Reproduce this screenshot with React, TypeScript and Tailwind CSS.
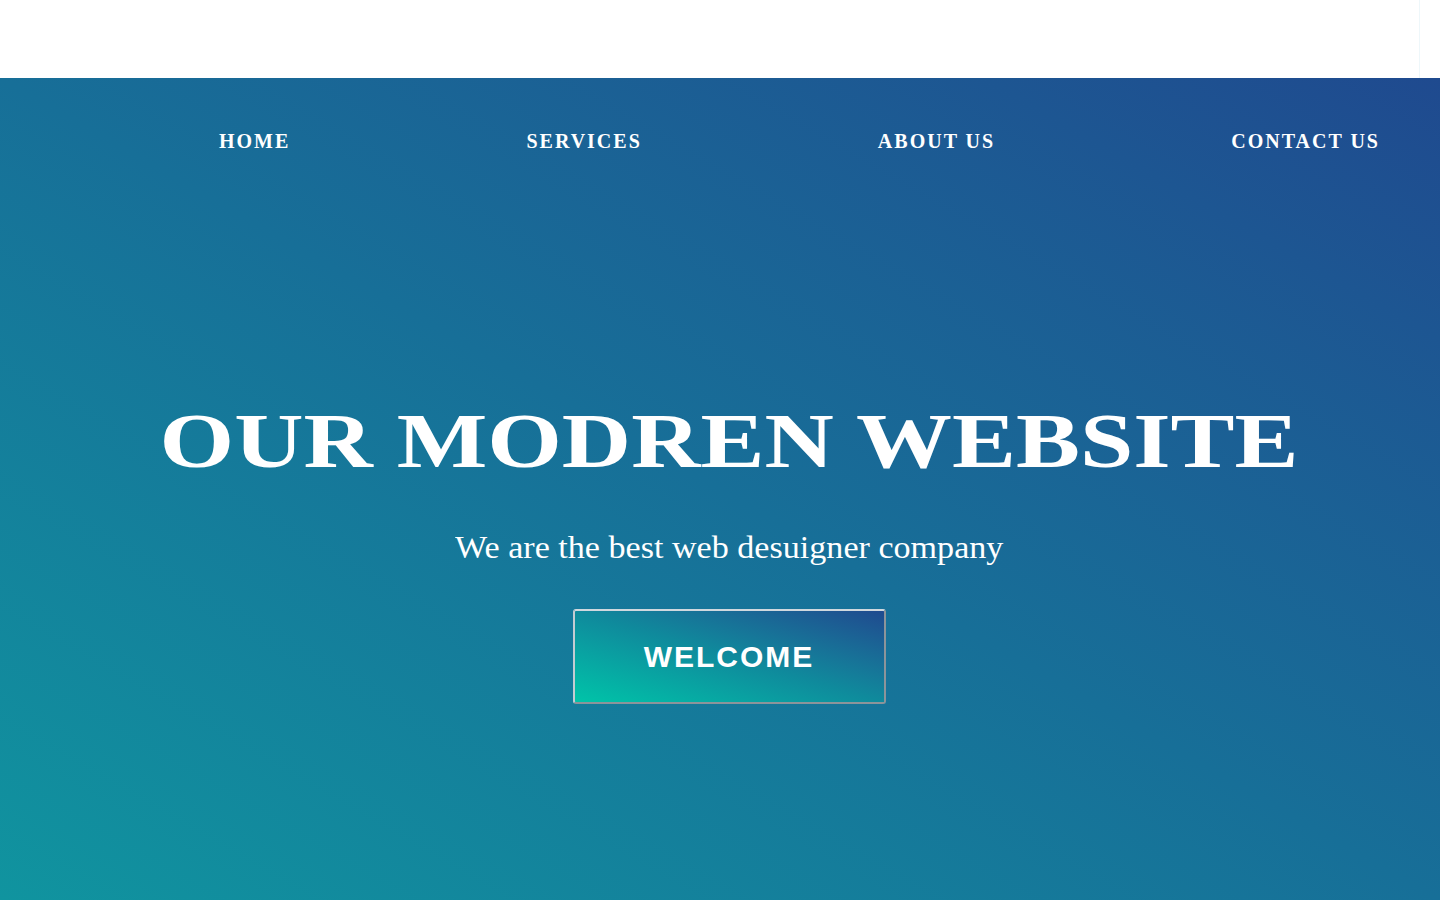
const navItems = ["HOME", "SERVICES", "ABOUT US", "CONTACT US"];

const App = () => {
  return (
    <div className="w-[1440px] h-[900px] overflow-hidden bg-white">
      {/* top white strip */}
      <div className="h-[78px] bg-white flex">
        <div className="w-[1420px] border-r border-[#eef7fa]" />
      </div>

      <section className="h-[822px] bg-gradient-to-tr from-[#10949f] via-[#176f98] to-[#1f4a8f] flex flex-col">
        <nav className="flex justify-between pl-[219px] pr-[60px] pt-[51px]">
          {navItems.map((item) => (
            <a
              key={item}
              href="#"
              className="text-white font-bold text-[20px] leading-[24px] tracking-[2px] font-['Liberation_Serif',serif]"
            >
              {item}
            </a>
          ))}
        </nav>

        <div className="flex flex-col items-center pt-[240px] pl-[18px]">
          <h1 className="text-white font-bold text-[78px] leading-[96px] scale-x-[1.23] font-['Liberation_Serif',serif]">
            OUR MODREN WEBSITE
          </h1>
          <p className="mt-[41px] text-white text-[31px] leading-[36px] scale-x-[1.1] font-['Liberation_Serif',serif]">
            We are the best web desuigner company
          </p>
          <button className="mt-[43px] w-[313px] h-[95px] rounded-[3px] border-2 border-t-[#d0d8de] border-l-[#c4ccd2] border-r-[#8c949a] border-b-[#8c949a] bg-gradient-to-tr from-[#00c4a8] via-[#0f8a9c] to-[#1f4a8f] text-white font-bold text-[30px] tracking-[2px] font-['Liberation_Sans',Arial,sans-serif]">
            WELCOME
          </button>
        </div>
      </section>
    </div>
  );
};

export default App;
